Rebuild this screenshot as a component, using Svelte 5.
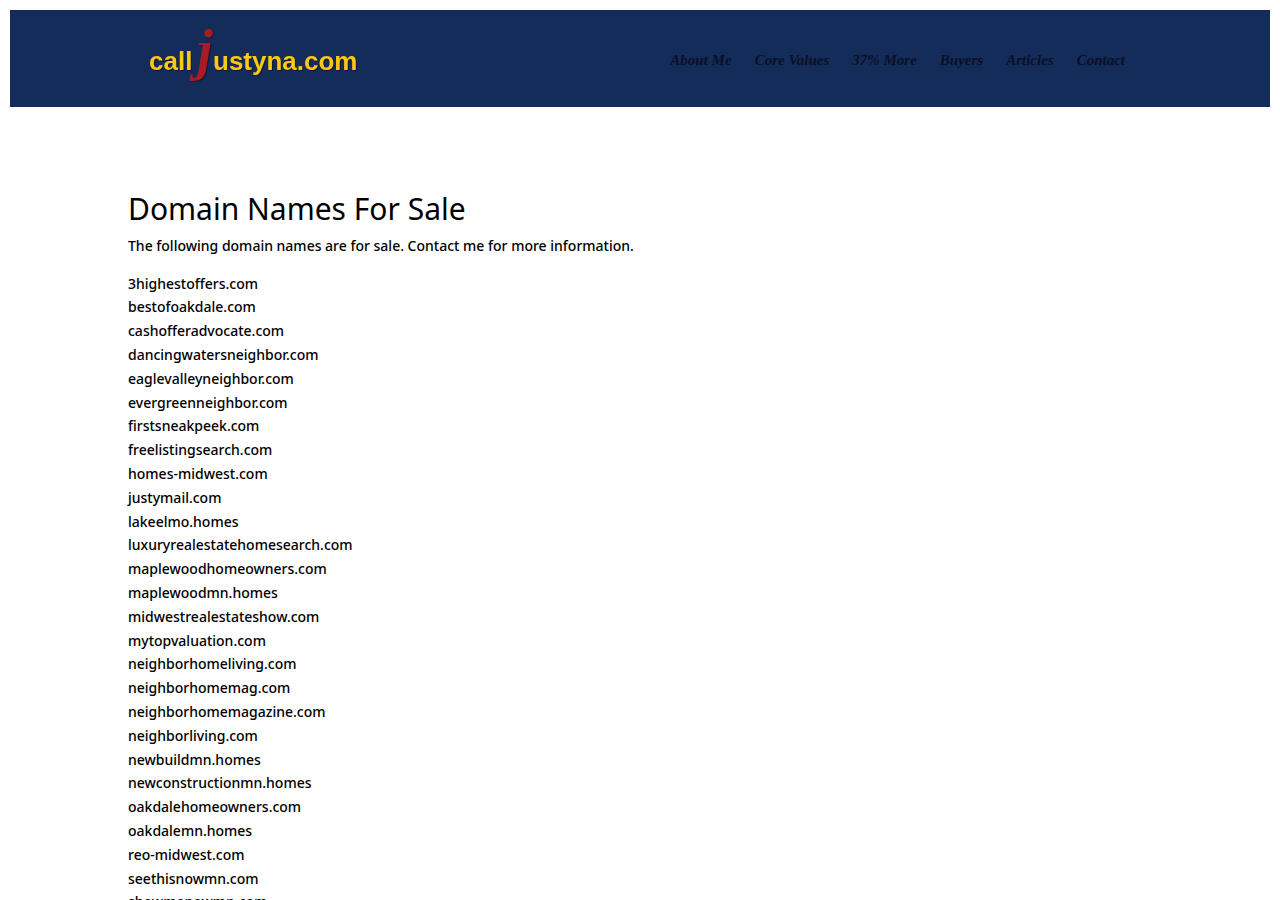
<script>
	const links = [
		{ label: 'About Me', href: '#about' },
		{ label: 'Core Values', href: '#values' },
		{ label: '37% More', href: '#more' },
		{ label: 'Buyers', href: '#buyers' },
		{ label: 'Articles', href: '#articles' },
		{ label: 'Contact', href: '#contact' }
	];

	const domains = [
		'3highestoffers.com',
		'bestofoakdale.com',
		'cashofferadvocate.com',
		'dancingwatersneighbor.com',
		'eaglevalleyneighbor.com',
		'evergreenneighbor.com',
		'firstsneakpeek.com',
		'freelistingsearch.com',
		'homes-midwest.com',
		'justymail.com',
		'lakeelmo.homes',
		'luxuryrealestatehomesearch.com',
		'maplewoodhomeowners.com',
		'maplewoodmn.homes',
		'midwestrealestateshow.com',
		'mytopvaluation.com',
		'neighborhomeliving.com',
		'neighborhomemag.com',
		'neighborhomemagazine.com',
		'neighborliving.com',
		'newbuildmn.homes',
		'newconstructionmn.homes',
		'oakdalehomeowners.com',
		'oakdalemn.homes',
		'reo-midwest.com',
		'seethisnowmn.com',
		'showmenowmn.com'
	];
</script>

<header class="header">
	<div class="header__row">
		<a class="header__logo" href="#home" aria-label="calljustyna.com">
			<svg width="212" height="60" viewBox="0 0 212 60">
				<text class="logo-word" x="1" y="44">call</text>
				<text class="logo-j" x="49" y="43">j</text>
				<text class="logo-word" x="65" y="44">ustyna.com</text>
			</svg>
		</a>
		<nav class="nav">
			{#each links as link}
				<a class="nav__link" href={link.href}>{link.label}</a>
			{/each}
		</nav>
	</div>
</header>

<main class="content">
	<h1 class="content__title">Domain Names For Sale</h1>
	<p class="content__intro">
		The following domain names are for sale. Contact me for more information.
	</p>
	<ul class="domains">
		{#each domains as domain}
			<li>{domain}</li>
		{/each}
	</ul>
</main>

<style>
	:global(body) {
		margin: 0;
		background: #fff;
		color: #000;
		font-family: 'Noto Sans', 'Open Sans', sans-serif;
		font-size: 14px;
		font-weight: 500;
		line-height: 1.7;
	}

	.header {
		margin: 10px;
		padding: 16px 0 21px;
		background: #142c59;
	}

	.header__row {
		display: flex;
		align-items: center;
		justify-content: space-between;
		box-sizing: border-box;
		width: 80%;
		margin: 0 auto;
		padding: 0 19px 0 12px;
	}

	.header__logo svg {
		display: block;
		overflow: visible;
		filter: drop-shadow(1px 1px 0 #0c1a38);
	}

	.logo-word {
		fill: #fdc90f;
		font-family: 'Liberation Sans', Arial, sans-serif;
		font-size: 26px;
		font-weight: 700;
	}

	.logo-j {
		fill: #a91d22;
		font-family: 'Liberation Serif', 'Times New Roman', serif;
		font-size: 56px;
		font-style: italic;
		font-weight: 700;
	}

	.nav {
		display: flex;
		gap: 23px;
		padding-top: 8px;
	}

	.nav__link {
		color: #0a0f26;
		font-family: 'Liberation Serif', Georgia, serif;
		font-size: 15px;
		font-style: italic;
		font-weight: 700;
		line-height: 20px;
		text-decoration: none;
	}

	.content {
		width: 80%;
		margin: 0 auto;
		padding: 6% 0;
	}

	.content__title {
		margin: 0;
		padding-bottom: 10px;
		font-size: 30px;
		font-weight: 400;
		line-height: 30px;
	}

	.content__intro {
		margin: 0;
		padding-bottom: 14px;
	}

	.domains {
		margin: 0;
		padding: 0;
		list-style: none;
	}
</style>
